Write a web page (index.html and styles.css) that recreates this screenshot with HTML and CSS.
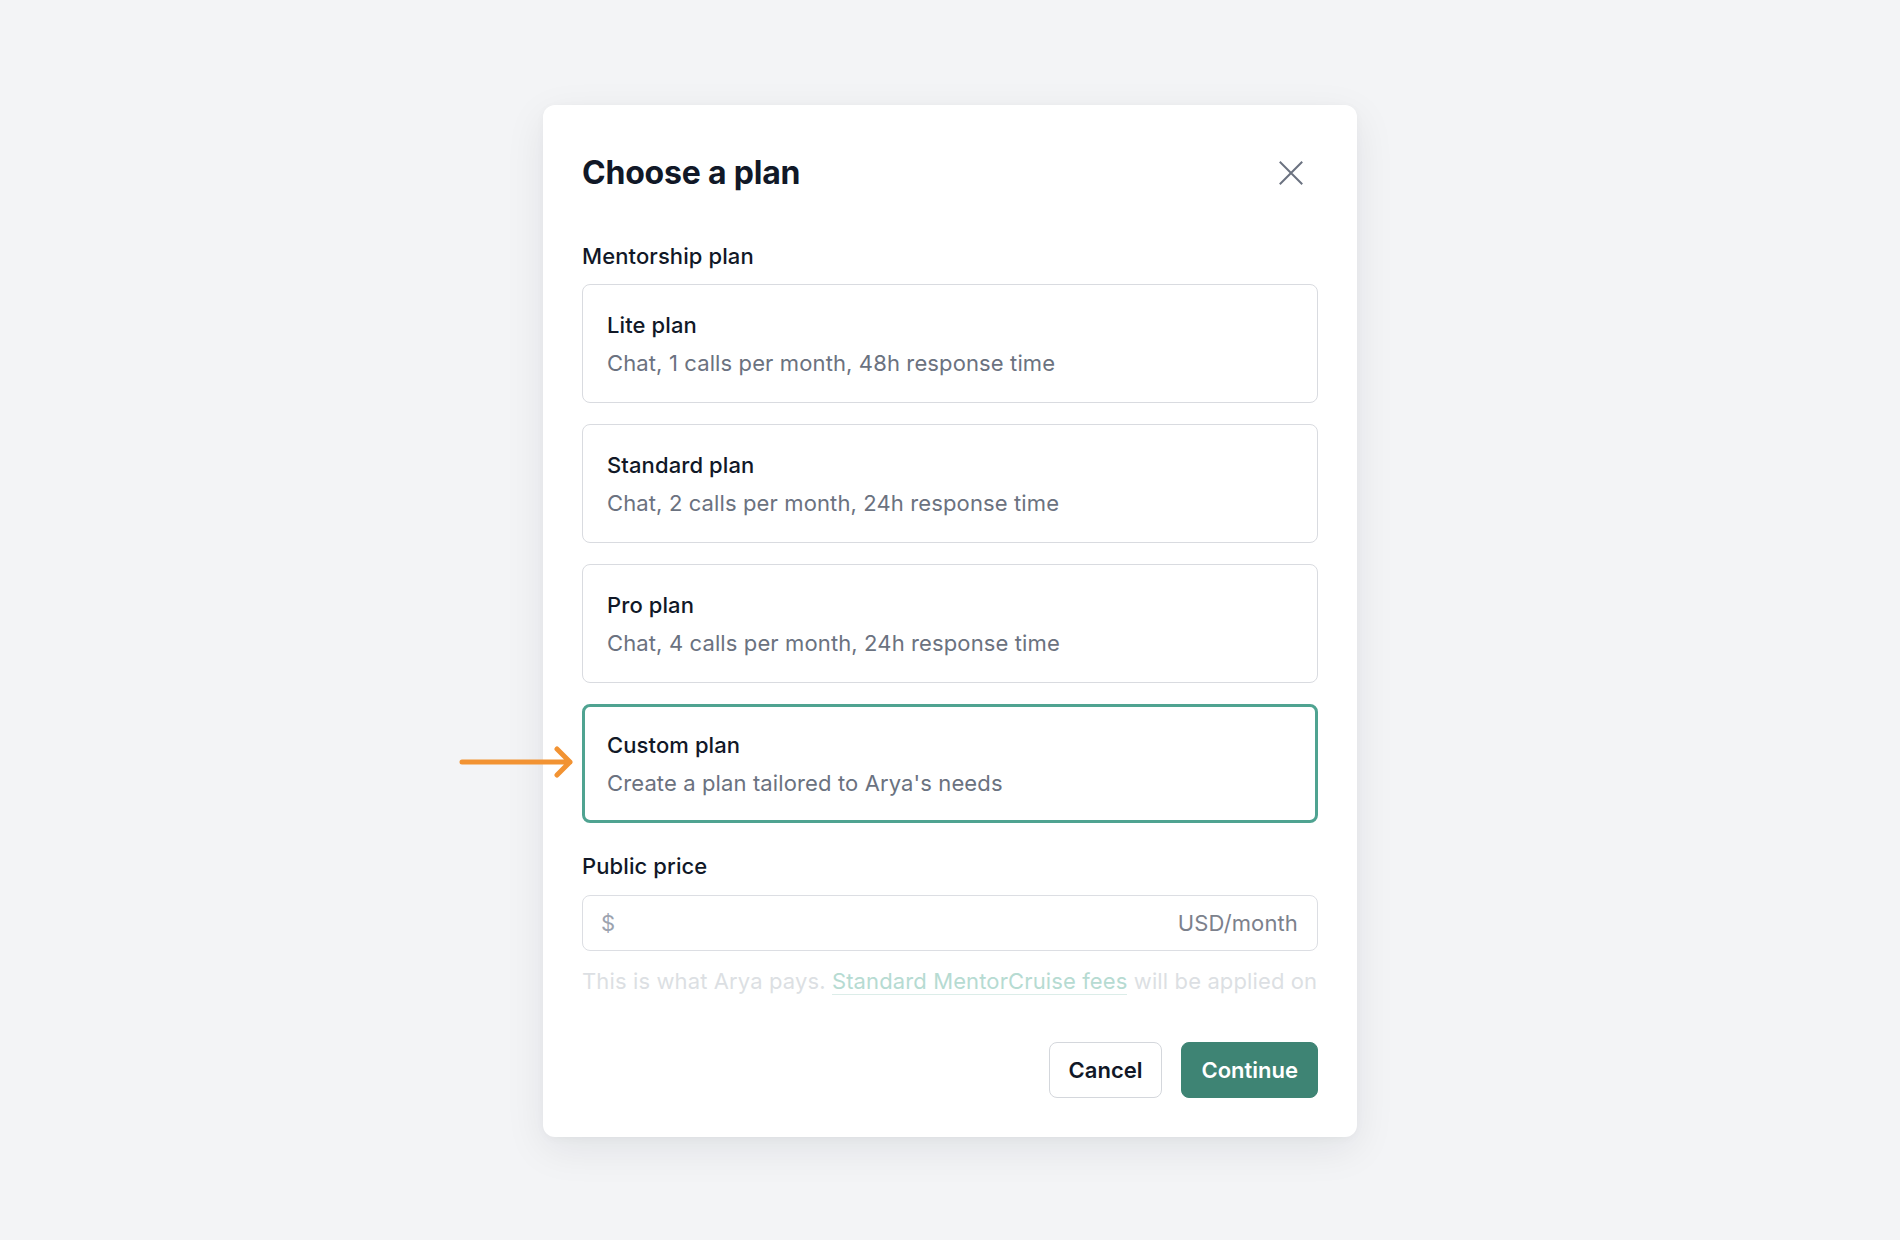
FILE: index.html
```html
<!DOCTYPE html>
<html lang="en">
<head>
<meta charset="utf-8">
<title>Choose a plan</title>
<link rel="stylesheet" href="styles.css">
</head>
<body>
<div class="modal">
  <div class="modal-header">
    <h1 class="modal-title">Choose a plan</h1>
    <button class="close-btn" aria-label="Close">
      <svg width="24" height="24" viewBox="0 0 24 24" fill="none" stroke="#6b7280" stroke-width="2" stroke-linecap="square">
        <path d="M1.5 1.5 L22.5 22.5 M22.5 1.5 L1.5 22.5"/>
      </svg>
    </button>
  </div>
  <div class="modal-body">
    <div class="field-label">Mentorship plan</div>
    <div class="plan-list">
      <div class="plan-card">
        <div class="plan-name">Lite plan</div>
        <div class="plan-desc">Chat, 1 calls per month, 48h response time</div>
      </div>
      <div class="plan-card">
        <div class="plan-name">Standard plan</div>
        <div class="plan-desc">Chat, 2 calls per month, 24h response time</div>
      </div>
      <div class="plan-card">
        <div class="plan-name">Pro plan</div>
        <div class="plan-desc">Chat, 4 calls per month, 24h response time</div>
      </div>
      <div class="plan-card plan-card-selected">
        <svg class="pointer-arrow" width="120" height="34" viewBox="0 0 120 34" fill="none" stroke="#f29333" stroke-width="5" stroke-linecap="round" stroke-linejoin="round">
          <path d="M3 17 H111 M98 4 L111 17 L98 30"/>
        </svg>
        <div class="plan-name">Custom plan</div>
        <div class="plan-desc">Create a plan tailored to Arya's needs</div>
      </div>
    </div>
    <div class="field-label field-label-price">Public price</div>
    <div class="price-input">
      <span class="price-prefix">$</span>
      <span class="price-suffix">USD/month</span>
    </div>
    <p class="helper-text">This is what Arya pays. <a class="helper-link" href="#">Standard MentorCruise fees</a> will be applied on</p>
  </div>
  <div class="modal-footer">
    <button class="btn btn-secondary">Cancel</button>
    <button class="btn btn-primary">Continue</button>
  </div>
</div>
</body>
</html>
```
FILE: styles.css
```css
* {
  box-sizing: border-box;
}

html, body {
  margin: 0;
  padding: 0;
}

body {
  width: 1900px;
  height: 1240px;
  padding-top: 1px;
  background: #f3f4f6;
  font-family: Inter, "Noto Sans", "Liberation Sans", sans-serif;
  display: flex;
  align-items: center;
  justify-content: center;
}

.modal {
  width: 814px;
  background: #ffffff;
  border-radius: 12px;
  padding: 0 39px 39px;
  box-shadow: 0 12px 40px rgba(17, 24, 39, 0.08), 0 2px 8px rgba(17, 24, 39, 0.03);
}

.modal-header {
  display: flex;
  align-items: center;
  justify-content: space-between;
  padding-top: 48px;
}

.modal-title {
  margin: 0;
  font-size: 32px;
  line-height: 40px;
  font-weight: 700;
  color: #111827;
  letter-spacing: -0.2px;
}

.close-btn {
  width: 40px;
  height: 40px;
  margin-right: 7px;
  margin-top: 0;
  padding: 0;
  border: 0;
  background: transparent;
  display: flex;
  align-items: center;
  justify-content: center;
}

.modal-body {
  padding-top: 48px;
}

.field-label {
  font-size: 22px;
  line-height: 30px;
  font-weight: 500;
  color: #111827;
  letter-spacing: 0.1px;
}

.field-label-price {
  margin-top: 28px;
}

.plan-list {
  margin-top: 13px;
  display: flex;
  flex-direction: column;
  gap: 21px;
}

.plan-card {
  position: relative;
  border: 1px solid #d9dbe0;
  border-radius: 8px;
  padding: 24px 24px 23px;
  display: flex;
  flex-direction: column;
  gap: 6px;
}

.plan-card-selected {
  border: 3px solid #4fa391;
  padding: 22px 22px 21px;
}

.pointer-arrow {
  position: absolute;
  left: -126px;
  top: 50%;
  margin-top: -18px;
}

.plan-name {
  font-size: 22px;
  line-height: 32px;
  font-weight: 500;
  color: #111827;
  letter-spacing: 0.1px;
}

.plan-desc {
  font-size: 22px;
  line-height: 32px;
  font-weight: 400;
  color: #6b7280;
  letter-spacing: 0.12px;
}

.price-input {
  margin-top: 14px;
  height: 56px;
  border: 1px solid #dcdee3;
  border-radius: 8px;
  padding: 0 19px 0 18px;
  display: flex;
  align-items: center;
  justify-content: space-between;
  font-size: 22px;
  letter-spacing: 0.12px;
}

.price-prefix {
  color: #9ca3af;
}

.price-suffix {
  color: #7c818c;
}

.helper-text {
  margin: 15px 0 0;
  height: 30px;
  font-size: 22px;
  line-height: 30px;
  color: #dcdfe3;
  letter-spacing: 0.12px;
  white-space: nowrap;
  overflow: hidden;
}

.helper-link {
  color: #b6dbd2;
  text-decoration: none;
  border-bottom: 1px solid #dcede9;
}

.modal-footer {
  display: flex;
  justify-content: flex-end;
  gap: 19px;
  padding-top: 46px;
}

.btn {
  height: 56px;
  padding: 0 19px;
  border-radius: 8px;
  font-family: Inter, "Noto Sans", "Liberation Sans", sans-serif;
  font-size: 22px;
  font-weight: 600;
  cursor: pointer;
}

.btn-secondary {
  background: #ffffff;
  border: 1px solid #d4d7dc;
  color: #111827;
}

.btn-primary {
  background: #3e8474;
  border: 1px solid #3e8474;
  color: #ffffff;
}
```
